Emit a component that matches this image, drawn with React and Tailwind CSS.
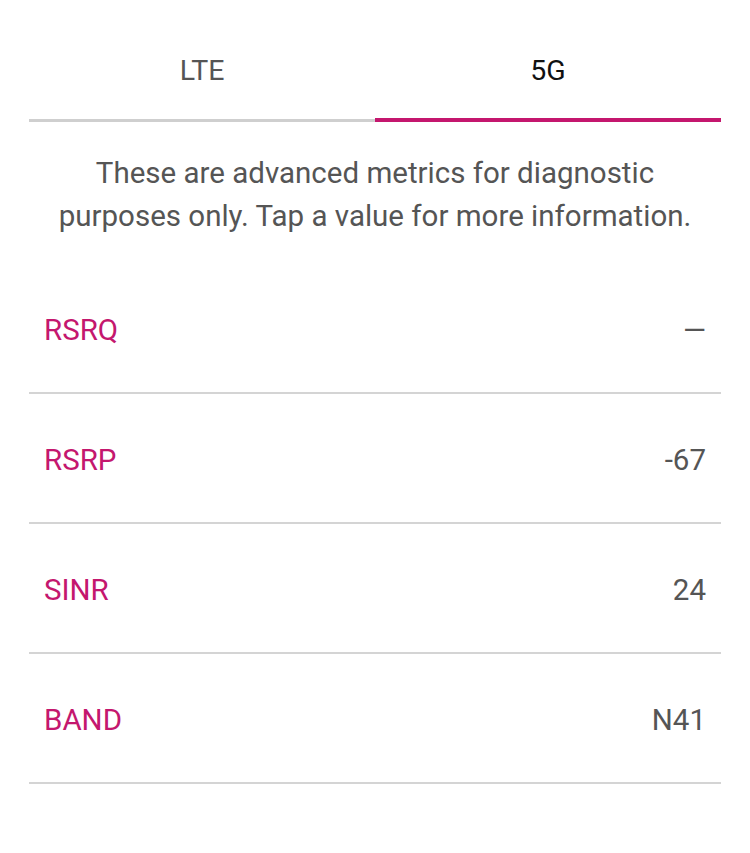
const rows = [
  { label: 'RSRQ', value: '—' },
  { label: 'RSRP', value: '-67' },
  { label: 'SINR', value: '24' },
  { label: 'BAND', value: 'N41' },
];

export default function App() {
  return (
    <div className="w-[750px] h-[853px] bg-white font-['Roboto',sans-serif]">
      <div className="mx-[29px]">
        {/* tabs */}
        <div className="flex pt-[53px]">
          <div className="flex-1 flex flex-col items-center">
            <span className="text-[28.5px] leading-[36px] text-[#555555] pb-[29px]">LTE</span>
            <div className="w-full h-[4px] flex items-end">
              <div className="w-full h-[3px] bg-[#cfcfcf]" />
            </div>
          </div>
          <div className="flex-1 flex flex-col items-center">
            <span className="text-[28.5px] leading-[36px] text-[#111111] pb-[29px]">5G</span>
            <div className="w-full h-[4px] bg-[#c4176e]" />
          </div>
        </div>

        <p className="mt-[30px] text-center text-[29.5px] leading-[43px] text-[#555555]">
          These are advanced metrics for diagnostic
          <br />
          purposes only. Tap a value for more information.
        </p>

        <div className="mt-[26px]">
          {rows.map((r) => (
            <div
              key={r.label}
              className="h-[130px] flex items-center justify-between pl-[15px] pr-[15px] pt-[5px] border-b-2 border-[#d4d4d4]"
            >
              <span className="text-[29.5px] text-[#c4176e]">{r.label}</span>
              <span className="text-[29.5px] text-[#555555]">{r.value}</span>
            </div>
          ))}
        </div>
      </div>
    </div>
  );
}
